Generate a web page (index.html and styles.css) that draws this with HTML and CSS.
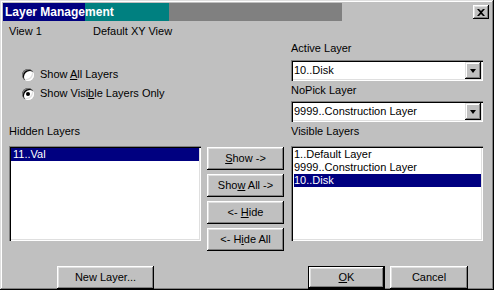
FILE: index.html
```html
<!DOCTYPE html>
<html>
<head>
<meta charset="utf-8">
<link rel="stylesheet" href="styles.css">
</head>
<body>
<div class="dialog">
  <div class="titlebar">
    <span class="title">Layer Management</span>
    <span class="close"><svg width="8" height="7" viewBox="0 0 8 7"><path d="M0 0h2l2 2 2-2h2L5 3.5 8 7H6L4 5 2 7H0l3-3.5z" fill="#000"/></svg></span>
  </div>
  <div class="content">
    <div class="top-left">
      <div class="view-row"><span class="view-name">View 1</span><span>Default XY View</span></div>
      <div class="radios">
        <div class="radio"><span class="radio-circle"></span><span>Show <u>A</u>ll Layers</span></div>
        <div class="radio"><span class="radio-circle checked"></span><span>Show Visi<u>b</u>le Layers Only</span></div>
      </div>
    </div>
    <div class="top-right">
      <div class="label">Active Layer</div>
      <div class="combo first"><span class="combo-text">10..Disk</span><span class="combo-btn"><span class="arrow"></span></span></div>
      <div class="label nopick">NoPick Layer</div>
      <div class="combo second"><span class="combo-text">9999..Construction Layer</span><span class="combo-btn"><span class="arrow"></span></span></div>
    </div>
    <div class="label list-label hidden-label">Hidden Layers</div>
    <div class="label list-label visible-label">Visible Layers</div>
    <div class="list hidden-list">
      <div class="item selected">11..Val</div>
    </div>
    <div class="move-buttons">
      <div class="btn"><span><u>S</u>how -&gt;</span></div>
      <div class="btn"><span>Sho<u>w</u> All -&gt;</span></div>
      <div class="btn"><span>&lt;- <u>H</u>ide</span></div>
      <div class="btn"><span>&lt;- H<u>i</u>de All</span></div>
    </div>
    <div class="list visible-list">
      <div class="item">1..Default Layer</div>
      <div class="item">9999..Construction Layer</div>
      <div class="item selected">10..Disk</div>
    </div>
  </div>
  <div class="footer">
    <div class="btn new-layer"><span>New Layer...</span></div>
    <div class="spacer"></div>
    <div class="btn default ok"><span><u>O</u>K</span></div>
    <div class="btn cancel"><span>Cancel</span></div>
  </div>
</div>
</body>
</html>
```

FILE: styles.css
```css
* { box-sizing: border-box; }
html, body { margin: 0; padding: 0; }
body {
  font-family: "Liberation Sans", Arial, sans-serif;
  font-size: 11px;
  line-height: 13px;
  color: #000;
  background: #c0c0c0;
}
.dialog {
  width: 494px;
  height: 290px;
  background: #c0c0c0;
  padding: 3px;
  box-shadow: inset -1px -1px #000, inset 1px 1px #dfdfdf, inset -2px -2px #808080, inset 2px 2px #fff;
  display: flex;
  flex-direction: column;
}
.titlebar {
  height: 18px;
  display: flex;
  align-items: center;
  justify-content: space-between;
  background: linear-gradient(to right, #000080 0 82px, #008080 82px 166px, #808080 166px 339px, #c0c0c0 339px);
}
.title {
  color: #fff;
  font-weight: bold;
  font-size: 12px;
  padding-left: 2px;
  line-height: 18px;
}
.close {
  width: 16px;
  height: 14px;
  margin-right: 2px;
  background: #c0c0c0;
  display: flex;
  align-items: center;
  justify-content: center;
  box-shadow: inset -1px -1px #000, inset 1px 1px #fff, inset -2px -2px #808080, inset 2px 2px #dfdfdf;
}
.close svg { display: block; margin-left: -1px; }
.content {
  display: grid;
  grid-template-columns: 192px 6px 77px 7px 192px;
  grid-template-rows: auto auto auto;
  padding-left: 6px;
}
.top-left { grid-column: 1 / 4; grid-row: 1; padding-top: 4px; }
.top-right { grid-column: 5; grid-row: 1; padding-top: 21px; }
.view-row { display: flex; }
.view-name { width: 84px; }
.radios { margin-top: 30px; padding-left: 13px; display: flex; flex-direction: column; gap: 6px; }
.radio { display: flex; align-items: center; height: 13px; }
.radio-circle {
  width: 12px;
  height: 12px;
  border-radius: 50%;
  background: #fff;
  margin-right: 6px;
  position: relative;
  box-shadow: inset 1px 1px #808080, inset 2px 2px #000, inset -1px -1px #fff, inset -2px -2px #dfdfdf;
}
.radio-circle.checked::after {
  content: "";
  position: absolute;
  left: 4px;
  top: 4px;
  width: 4px;
  height: 4px;
  border-radius: 50%;
  background: #000;
}
.combo {
  height: 21px;
  margin-top: 5px;
  background: #fff;
  display: flex;
  align-items: center;
  justify-content: space-between;
  padding: 2px;
  box-shadow: inset 1px 1px #808080, inset 2px 2px #000, inset -1px -1px #fff, inset -2px -2px #dfdfdf;
}
.combo.second { margin-top: 4px; }
.label.nopick { margin-top: 3px; }
.combo-text { padding-left: 1px; }
.combo-btn {
  width: 16px;
  height: 17px;
  background: #c0c0c0;
  display: flex;
  align-items: center;
  justify-content: center;
  box-shadow: inset -1px -1px #000, inset 1px 1px #dfdfdf, inset -2px -2px #808080, inset 2px 2px #fff;
}
.arrow {
  width: 0;
  height: 0;
  border-left: 3.5px solid transparent;
  border-right: 3.5px solid transparent;
  border-top: 4px solid #000;
}
.list-label { grid-row: 2; margin-top: 3px; }
.hidden-label { grid-column: 1; }
.visible-label { grid-column: 5; }
.list {
  grid-row: 3;
  margin-top: 8px;
  height: 95px;
  background: #fff;
  padding: 2px;
  box-shadow: inset 1px 1px #808080, inset 2px 2px #000, inset -1px -1px #fff, inset -2px -2px #dfdfdf;
}
.hidden-list { grid-column: 1; }
.visible-list { grid-column: 5; padding-left: 3px; }
.item { height: 13px; line-height: 13px; padding-left: 2px; white-space: nowrap; }
.visible-list .item { padding-left: 0; }
.item.selected { background: #000080; color: #fff; }
.move-buttons {
  grid-column: 3;
  grid-row: 3;
  margin-top: 9px;
  display: flex;
  flex-direction: column;
  gap: 4px;
}
.btn {
  height: 23px;
  background: #c0c0c0;
  display: flex;
  align-items: center;
  justify-content: center;
  box-shadow: inset -1px -1px #000, inset 1px 1px #fff, inset -2px -2px #808080, inset 2px 2px #dfdfdf;
}
.btn.default {
  border: 1px solid #000;
}
.footer {
  display: flex;
  margin-top: 15px;
  padding-left: 54px;
  padding-right: 23px;
  gap: 5px;
}
.spacer { flex: 1; }
.new-layer { width: 97px; }
.ok { width: 77px; }
.cancel { width: 78px; }
```
